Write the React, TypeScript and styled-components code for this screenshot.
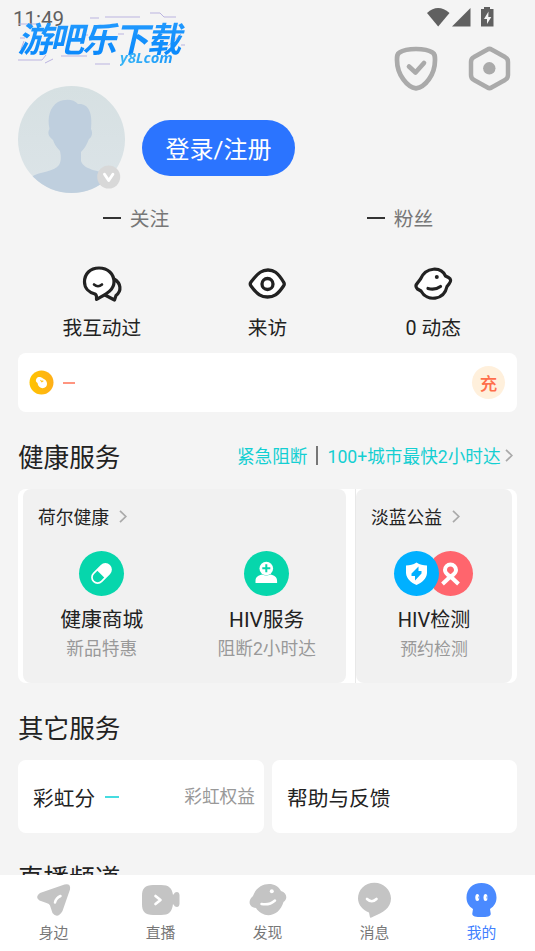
import React from 'react';
import styled, { createGlobalStyle } from 'styled-components';

const GlobalStyle = createGlobalStyle`
  * { box-sizing: border-box; }
  html, body { margin: 0; padding: 0; }
  body {
    background: #f4f4f4;
    color: #222;
    font-family: Roboto, "Noto Sans CJK SC", sans-serif;
    font-weight: 400;
    overflow: hidden;
  }
  svg { display: block; flex: none; overflow: visible; }
`;

const Screen = styled.div`
  position: relative;
  display: flex;
  flex-direction: column;
  width: 535px;
  height: 951px;
  overflow: hidden;
  background: #f4f4f4;
`;

const Content = styled.main`
  flex: 1;
  min-height: 0;
  overflow: hidden;
`;

const StatusBar = styled.div`
  display: flex;
  justify-content: space-between;
  height: 34px;
  padding: 7px 40px 0 13px;
  color: #606060;
`;

const Clock = styled.span`
  font-size: 20.5px;
  line-height: 25px;
`;

const Watermark = styled.div`
  position: absolute;
  left: 18px;
  top: 12px;
  width: 170px;
  height: 54px;
`;

const Streaks = styled.svg`
  position: absolute;
  inset: 0;
`;

const WatermarkName = styled.div`
  position: absolute;
  left: 3px;
  top: 3px;
  font: 700 34.5px/44px "Noto Sans CJK SC", sans-serif;
  letter-spacing: -2.2px;
  padding-right: 6px;
  white-space: nowrap;
  transform: skewX(-13deg);
  background: linear-gradient(#269dff, #0787fb);
  background-clip: text;
  color: transparent;
`;

const WatermarkSite = styled.div`
  position: absolute;
  left: 102px;
  top: 36px;
  font: italic 700 14.800px/18px "Open Sans", sans-serif;
  padding-right: 3px;
  background: linear-gradient(90deg, #36b4f5, #1c98fb);
  background-clip: text;
  color: transparent;
`;

const TopActions = styled.div`
  display: flex;
  justify-content: flex-end;
  gap: 29px;
  height: 52px;
  padding: 12px 24px 0 0;
`;

const Profile = styled.section`
  display: flex;
  align-items: flex-start;
  gap: 17px;
  height: 107px;
  padding-left: 18px;
`;

const Avatar = styled.div`
  width: 107px;
  height: 107px;
`;

const LoginButton = styled.button`
  width: 153px;
  height: 56px;
  margin-top: 34px;
  padding: 0 0 1px;
  border: 0;
  border-radius: 28px;
  background: #2b74ff;
  color: #fff;
  font: inherit;
  font-size: 24px;
`;

const Stats = styled.section`
  display: grid;
  grid-template-columns: 264px 264px;
  padding-left: 4px;
  height: 49px;
  margin-bottom: 2px;
`;

const Stat = styled.div`
  display: flex;
  align-items: center;
  justify-content: center;
  gap: 9px;
  font-size: 19.8px;
  color: #777;
`;

const Dash = styled.span<{ $w: number; $color: string }>`
  width: ${p => p.$w}px;
  height: 2px;
  background: ${p => p.$color};
`;

const QuickActions = styled.section`
  display: grid;
  grid-template-columns: repeat(3, 1fr);
  height: 109px;
  padding: 20px 19px 0;
`;

const QuickAction = styled.div`
  display: flex;
  flex-direction: column;
  align-items: center;
  gap: 11px;
  font-size: 19.7px;
  line-height: 28px;
`;

const Card = styled.div`
  background: #fff;
  border-radius: 8px;
`;

const Wallet = styled(Card)`
  display: flex;
  align-items: center;
  gap: 9px;
  height: 59px;
  margin: 0 18px;
  padding: 0 12px 0 11px;
`;

const Recharge = styled.span`
  display: grid;
  place-items: center;
  width: 33px;
  height: 33px;
  margin-left: auto;
  padding-bottom: 1px;
  border-radius: 50%;
  background: #fff0dc;
  color: #ff6e4b;
  font-size: 17.5px;
  font-weight: 500;
`;

const SectionHead = styled.div`
  display: flex;
  align-items: center;
  justify-content: space-between;
  height: 77px;
  padding: 14px 22px 0 18px;
`;

const Heading = styled.h2`
  margin: 0;
  font-size: 25.6px;
  font-weight: 400;
  line-height: 38px;
`;

const Promo = styled.div`
  display: flex;
  align-items: center;
  margin-top: -5px;
  color: #14cfd2;
  font-size: 17.65px;
`;

const PromoDivider = styled.span`
  width: 2px;
  height: 19px;
  margin: 0 9px;
  background: #777;
`;

const HealthCard = styled(Card)`
  display: flex;
  height: 194px;
  margin: 0 18px;
  padding: 0 5px;
`;

const Panel = styled.div<{ $w: number }>`
  width: ${p => p.$w}px;
  border-radius: 8px;
  background: #f1f1f1;
`;

const PanelGap = styled.div`
  width: 10px;
  border-right: 1px solid #e8e8e8;
`;

const PanelTitle = styled.div`
  display: flex;
  align-items: center;
  gap: 10px;
  height: 54px;
  padding-left: 15px;
  font-size: 17.8px;
`;

const Services = styled.div<{ $cols: number }>`
  display: grid;
  grid-template-columns: repeat(${p => p.$cols}, 1fr);
`;

const Service = styled.div<{ $shift?: number; $small?: boolean }>`
  display: flex;
  flex-direction: column;
  align-items: center;
  padding-top: 7px;
  margin-left: ${p => p.$shift || 0}px;
  font-size: ${p => (p.$small ? 20 : 20.8)}px;
  line-height: 30px;
  white-space: nowrap;
`;

const ServiceIcon = styled.div<{ $nudge?: number }>`
  display: flex;
  align-items: flex-end;
  height: 46px;
  margin-bottom: 9px;
  padding-right: ${p => p.$nudge || 0}px;
`;

const Note = styled.span<{ $small?: boolean }>`
  color: #999;
  font-size: ${p => (p.$small ? 16.9 : 17.7)}px;
  line-height: 28px;
`;

const OtherCards = styled.div`
  display: grid;
  grid-template-columns: 246px 245px;
  gap: 8px;
  padding: 0 18px;
`;

const OtherCard = styled(Card)`
  display: flex;
  align-items: center;
  gap: 10px;
  height: 73px;
  padding: 0 9px 0 15px;
  font-size: 20.7px;
`;

const Perk = styled(Note)`
  margin-left: auto;
`;

const LiveHead = styled.div`
  height: 60px;
  padding: 27px 18px 0;
`;

const TabBar = styled.nav`
  display: grid;
  grid-template-columns: repeat(5, 107px);
  height: 76px;
  background: #fff;
`;

const Tab = styled.div<{ $active?: boolean }>`
  display: flex;
  flex-direction: column;
  align-items: center;
  gap: 3px;
  padding-top: 7px;
  font-size: 14.8px;
  line-height: 24px;
  color: ${p => (p.$active ? '#417fff' : '#777')};
`;

const Chevron = () => (
  <svg width="8" height="13" viewBox="0 0 8 13" fill="none" stroke="#aaa" strokeWidth="1.7">
    <path d="M1 .8 6.8 6.5 1 12.2" />
  </svg>
);

const SignalIcons = () => (
  <svg width="68" height="21" viewBox="0 0 68 21" fill="#606060">
    <path d="M0 6Q11-4 22.500 6L11.200 19.500Z" />
    <path d="M25 19.500 43.500 1V19.500Z" />
    <path d="M54 2h3V0h6v2h3.500v17.500H54Z" />
    <path d="M61.500 4.500 57 12h3v5l4.300-7h-3Z" fill="#f4f4f4" />
  </svg>
);

const ShieldIcon = () => (
  <svg width="44" height="45" viewBox="0 0 44 45" fill="none" stroke="#aaa" strokeWidth="4.700" strokeLinecap="round" strokeLinejoin="round">
    <path d="M22 3C14 3 8.500 4.500 5.500 6.500 3 8 3 10 3 14c0 15 10.500 27.500 19 28.300C31 41.500 41 29 41 14c0-4 0-6-2.500-7.500C35.500 4.500 30 3 22 3Z" />
    <path d="m15 20.500 6.500 6 8.500-9.500" />
  </svg>
);

const HexIcon = () => (
  <svg width="44" height="45" viewBox="0 0 44 45" fill="none" stroke="#aaa" strokeWidth="4.500" strokeLinejoin="round">
    <path d="M20.500 3.500Q22.500 2.200 24.500 3.500L38 11Q41 12.500 41 16V29Q41 32.500 38 34L24.500 41.500Q22.500 42.800 20.500 41.500L7 34Q4 32.500 4 29V16Q4 12.500 7 11Z" />
    <circle cx="22.300" cy="22.300" r="6.200" fill="#aaa" stroke="none" />
  </svg>
);

const AvatarImage = () => (
  <svg width="107" height="107" viewBox="0 0 107 107">
    <defs>
      <clipPath id="face"><circle cx="53.500" cy="53.500" r="53.500" /></clipPath>
      <linearGradient id="sky" x2="0" y2="1"><stop stopColor="#d6e0e2" /><stop offset="1" stopColor="#dce4e8" /></linearGradient>
    </defs>
    <g clipPath="url(#face)">
      <path d="M0 0h107v107H0Z" fill="url(#sky)" />
      <path d="M13 91C23 85 36 86 41 79 43.500 75 43 70 42 65 38 61 36 57 35 54 31 51 29 47 31.500 43 29 31 32 21 40 16 47 12.500 56 13 60 18 70 17 75 26 73 43 75 47 74 51 71 53 69 58 67 62 63 66V75C66 85 83 84 96 91V107H13Z" fill="#bfcfde" />
    </g>
    <circle cx="90.700" cy="91" r="11.500" fill="#d8d8d8" />
    <path d="m86.500 88.300 4.200 6.200 4.200-6.200" fill="none" stroke="#fff" strokeWidth="2.900" strokeLinecap="round" strokeLinejoin="round" />
  </svg>
);

const ChatsIcon = () => (
  <svg width="40" height="40" viewBox="0 0 40 40" fill="#fff" stroke="#222" strokeWidth="3.200" strokeLinecap="round" strokeLinejoin="round">
    <path d="M32 15C39 19 40 27 34 31.500L32.500 36 22 30.500Z" fill="#f4f4f4" />
    <path d="M17 4C8 4 2.500 10 2.500 18 2.500 24 7 28.500 13 30Q15 31 14.500 35.500C22 31 32 27 32 18 32 10 26 4 17 4Z" />
    <path d="M12 20.500q4 3.500 8 0" strokeWidth="2.600" fill="none" />
  </svg>
);

const EyeIcon = () => (
  <svg width="40" height="40" viewBox="0 0 40 40" fill="none" stroke="#222" strokeWidth="3.300">
    <path d="M3.500 19C11 9 15 7 20.500 7S30 9 36 19Q37.500 21 36 23C30 32 26 34 20 34S10 32 3.500 23Q2 21 3.500 19Z" fill="#fff" transform="translate(0.500 -1)" />
    <circle cx="20.500" cy="20" r="5.500" />
  </svg>
);

const LemonIcon = () => (
  <svg width="40" height="40" viewBox="0 0 40 40" fill="#fff" stroke="#222" strokeWidth="3.200" strokeLinecap="round" strokeLinejoin="round">
    <path d="M7.500 15C13 2.500 28 2.500 32.500 12L35.500 13.500Q39.500 15.500 36 20L34 22.500C31 36.500 14 38 8 27L4.500 25Q1.500 22 4.500 19Z" />
    <path d="M15 24.500Q22 26.500 27.500 22.500" fill="none" />
    <circle cx="23.800" cy="13" r="2" fill="#222" stroke="none" />
  </svg>
);

const CoinIcon = () => (
  <svg width="25" height="25" viewBox="0 0 25 25">
    <defs><linearGradient id="coin"><stop stopColor="#ffc400" /><stop offset="1" stopColor="#ffaf18" /></linearGradient></defs>
    <circle cx="12.500" cy="12.500" r="12" fill="url(#coin)" />
    <path d="M7.500 8.500C9 6.300 12 6.700 14 8.500 18 10 19 14 17 16.800 14 19.500 9 18 8.500 13 6.500 12 6.500 10 7.500 8.500Z" fill="#fff" />
    <path d="m11.500 10 1.300 1.800 1.500-1" fill="none" stroke="#ffc31a" strokeWidth="1.100" />
  </svg>
);

const PillIcon = () => (
  <svg width="45" height="45" viewBox="0 0 45 45">
    <circle cx="22.500" cy="22.500" r="22.500" fill="#06d6ac" />
    <g transform="rotate(-45 22.500 22.500)">
      <rect x="10.500" y="16" width="24" height="13" rx="6.500" fill="#fff" />
      <path d="M21.500 17.700h-4.500a4.800 4.800 0 0 0 0 9.600h4.500Z" fill="#06d6ac" />
    </g>
  </svg>
);

const NurseIcon = () => (
  <svg width="45" height="45" viewBox="0 0 45 45" fill="#fff">
    <circle cx="22.500" cy="22.500" r="22.500" fill="#06d6ac" />
    <circle cx="22.300" cy="17.500" r="6.800" />
    <path d="M11.500 32v-2c0-4 3-6 7-6.500q3.800 2 7.600 0c4 .5 7 2.500 7 6.500v2Z" />
    <path d="M22.300 13.300v8M18.300 17.300h8" stroke="#06d6ac" strokeWidth="2" />
  </svg>
);

const TestIcon = () => (
  <svg width="79" height="45" viewBox="0 0 79 45">
    <circle cx="56.500" cy="22.500" r="22.500" fill="#ff656d" />
    <circle cx="22.500" cy="22.500" r="22.500" fill="#00b0ff" />
    <path d="M22.500 11.500C26 14 29 14 33 14.500V22C32.500 28 28 31.500 22.500 34 17 31.500 12.500 28 12 22V14.500C16 14 19 14 22.500 11.500Z" fill="#fff" />
    <path d="M24.500 15.500 17.500 22.500v2.500h3.500v4.500l6.500-7v-2.500h-3Z" fill="#00b0ff" />
    <path d="m48.500 33 8-7.500q5.500-3 5.500-6.500a5.500 5.500 0 0 0-11 0q0 3.500 5.500 6.500l8 7.500" fill="none" stroke="#fff" strokeWidth="4" />
  </svg>
);

const NearbyIcon = () => (
  <svg width="38" height="36" viewBox="0 0 38 36">
    <path d="M5 11 29.500 2.500Q36 1 35 7.500L27.500 29Q22.500 37.500 17.500 31L15 23.500Q14.500 21.500 11.500 21L4.500 18.500Q-.5 15 5 11Z" fill="#c4c4c4" />
    <path d="M20 20.500q1-4.500 5.500-6.500" fill="none" stroke="#fff" strokeWidth="2.500" strokeLinecap="round" />
  </svg>
);

const LiveIcon = () => (
  <svg width="38" height="36" viewBox="0 0 38 36" fill="#c4c4c4">
    <path d="M11 3h8C27 3 30 6 31 13l2-2.500Q37 9 37.500 13V22Q37 26 33 24.500L31 22C30 30 27 33 19 33h-8C3 32.500 0 30 0 22v-8C0 6 3 3.500 11 3Z" />
    <path d="m13.500 14 5 4-5 4" fill="none" stroke="#fff" strokeWidth="2.700" strokeLinecap="round" strokeLinejoin="round" />
  </svg>
);

const DiscoverIcon = () => (
  <svg width="38" height="36" viewBox="0 0 38 36" fill="#c4c4c4">
    <path d="M4 14C9-.5 27-1.500 32 9 38 11 39 17 34.500 20 30 35.500 14 37 7 26-1 25-1 18 4 14Z" />
    <path d="M12.500 22q8 1.500 13.500-3.500" fill="none" stroke="#fff" strokeWidth="2.500" strokeLinecap="round" />
    <circle cx="22.800" cy="9.300" r="2" fill="#fff" />
  </svg>
);

const MessageIcon = () => (
  <svg width="38" height="36" viewBox="0 0 38 36">
    <path d="M18.500 .7C8.500 .7 2 8 2 16.500 2 23 7 28 13 30.500L14 35.500Q15.500 36 17.500 34.500C26.500 31 35 26 35 16.500 35 8 27.500 .7 18.500 .7Z" fill="#c4c4c4" />
    <path d="M11 17q4.800 4.500 9.500 0" fill="none" stroke="#fff" strokeWidth="2.600" strokeLinecap="round" />
  </svg>
);

const MineIcon = () => (
  <svg width="38" height="36" viewBox="0 0 38 36">
    <path d="M18.500 1C9.500 1 3.500 7 3.500 15.500c0 5 2 8.500 6.500 11.500L9.300 31.500c-.5 3 4.200 3.500 9.200 3.500s9.700-.5 9.200-3.500L27 27C31.500 24 33.500 20.500 33.500 15.500 33.500 7 27.500 1 18.500 1Z" fill="#4a8aff" />
    <ellipse cx="14.300" cy="15.500" rx="2" ry="3.500" fill="#fff" />
    <ellipse cx="22.500" cy="15.500" rx="2" ry="3.500" fill="#fff" />
    <path d="M15.800 14.500v2M24 14.500v2" stroke="#4a8aff" />
  </svg>
);

const tabs = [
  { label: '身边', Icon: NearbyIcon },
  { label: '直播', Icon: LiveIcon },
  { label: '发现', Icon: DiscoverIcon },
  { label: '消息', Icon: MessageIcon },
  { label: '我的', Icon: MineIcon, active: true },
];

export default function App() {
  return (
    <Screen>
      <GlobalStyle />
      <Content>
        <StatusBar>
          <Clock>11:49</Clock>
          <SignalIcons />
        </StatusBar>
        <TopActions>
          <ShieldIcon />
          <HexIcon />
        </TopActions>
        <Profile>
          <Avatar><AvatarImage /></Avatar>
          <LoginButton>登录/注册</LoginButton>
        </Profile>
        <Stats>
          <Stat><Dash $w={18} $color="#333" />关注</Stat>
          <Stat><Dash $w={18} $color="#333" />粉丝</Stat>
        </Stats>
        <QuickActions>
          <QuickAction><ChatsIcon />我互动过</QuickAction>
          <QuickAction><EyeIcon />来访</QuickAction>
          <QuickAction><LemonIcon />0 动态</QuickAction>
        </QuickActions>
        <Wallet>
          <CoinIcon />
          <Dash $w={12} $color="#ff9580" />
          <Recharge>充</Recharge>
        </Wallet>
        <SectionHead>
          <Heading>健康服务</Heading>
          <Promo>
            紧急阻断<PromoDivider />100+城市最快2小时达&nbsp;<Chevron />
          </Promo>
        </SectionHead>
        <HealthCard>
          <Panel $w={323}>
            <PanelTitle>荷尔健康<Chevron /></PanelTitle>
            <Services $cols={2}>
              <Service $shift={-4}><ServiceIcon><PillIcon /></ServiceIcon>健康商城<Note>新品特惠</Note></Service>
              <Service $shift={3}><ServiceIcon><NurseIcon /></ServiceIcon>HIV服务<Note>阻断2小时达</Note></Service>
            </Services>
          </Panel>
          <PanelGap />
          <Panel $w={156}>
            <PanelTitle>淡蓝公益<Chevron /></PanelTitle>
            <Services $cols={1}>
              <Service $small><ServiceIcon $nudge={2}><TestIcon /></ServiceIcon>HIV检测<Note $small>预约检测</Note></Service>
            </Services>
          </Panel>
        </HealthCard>
        <SectionHead><Heading>其它服务</Heading></SectionHead>
        <OtherCards>
          <OtherCard>彩虹分<Dash $w={14} $color="#45dce0" /><Perk>彩虹权益</Perk></OtherCard>
          <OtherCard>帮助与反馈</OtherCard>
        </OtherCards>
        <LiveHead><Heading>直播频道</Heading></LiveHead>
      </Content>
      <TabBar>
        {tabs.map(({ label, Icon, active }) => (
          <Tab key={label} $active={active}><Icon />{label}</Tab>
        ))}
      </TabBar>
      <Watermark>
        <Streaks width="170" height="54" fill="none" stroke="#bbb4e0" strokeWidth="1">
          <path d="M0 12h22M87 5h35M132 1h10l4 4h12M72 6h9M2 26h5M0 48h24l4-5M43 44h26M77 52h15M35 47l-8 4M150 34l13-12M163 33h4M100 22h6M65 23h5M3 37l3-8M68 38l9-6" />
        </Streaks>
        <WatermarkName>游吧乐下载</WatermarkName>
        <WatermarkSite>y8Lcom</WatermarkSite>
      </Watermark>
    </Screen>
  );
}
